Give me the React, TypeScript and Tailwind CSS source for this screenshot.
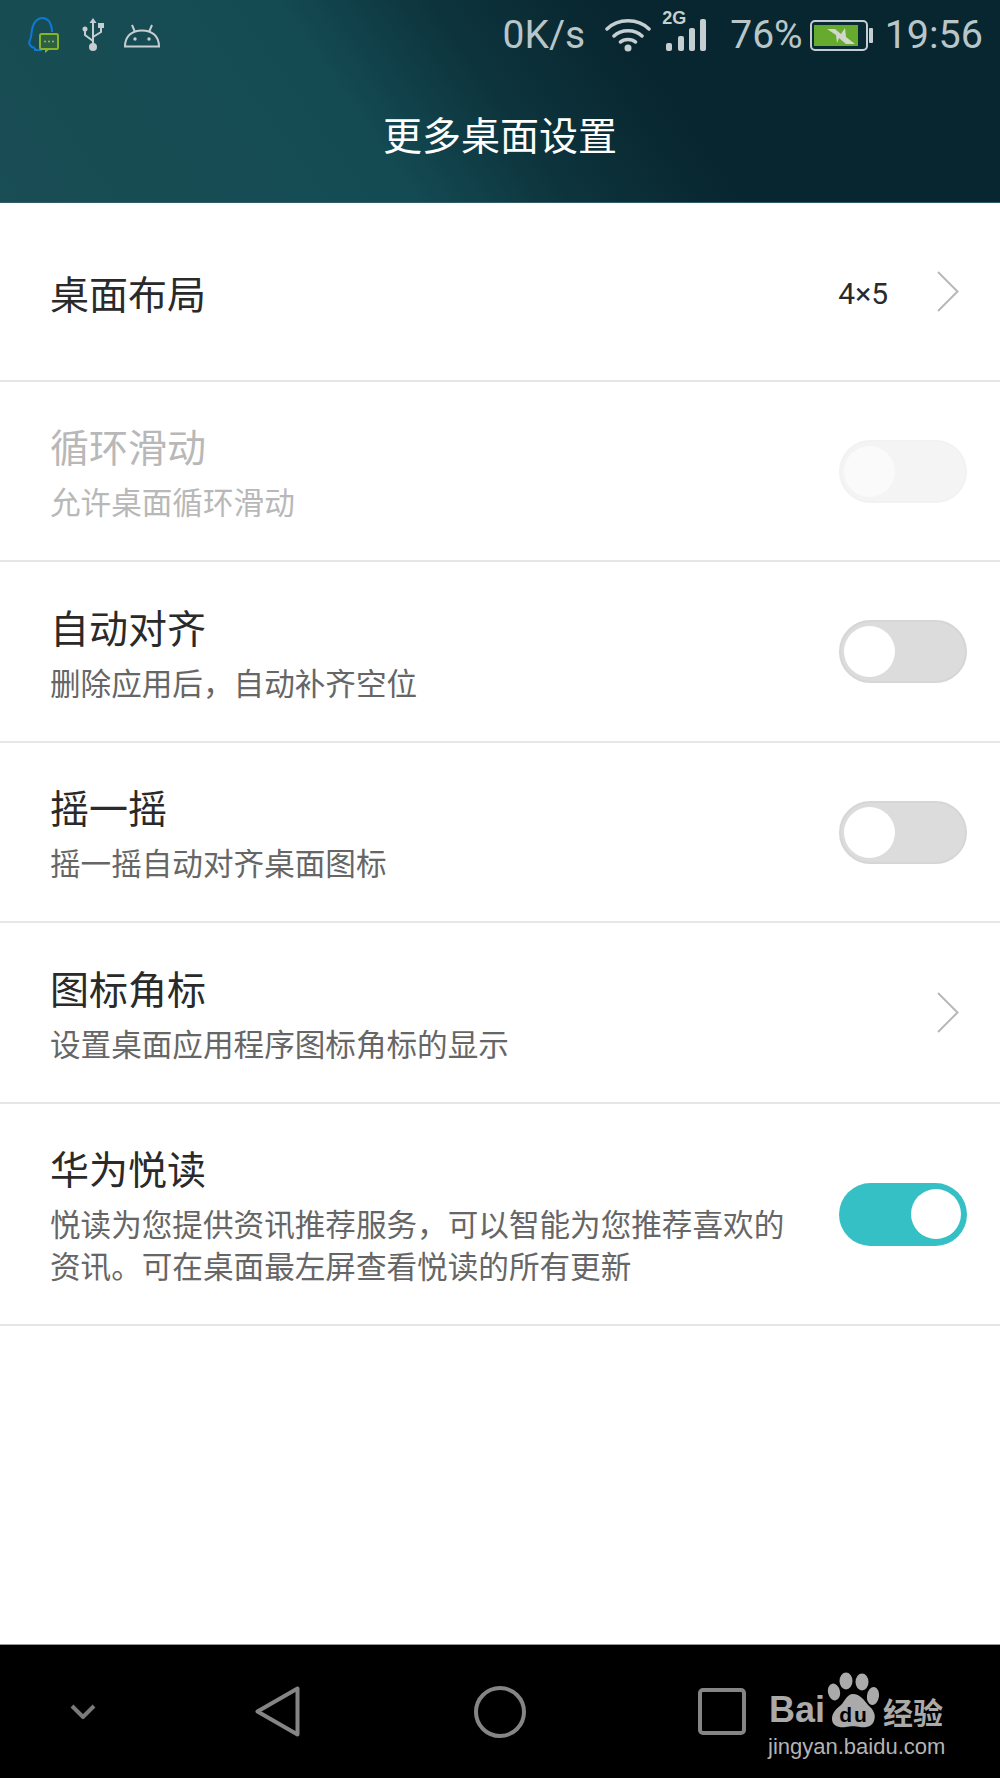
import React from "react";

const font = { fontFamily: '"Roboto","Noto Sans CJK SC",sans-serif' };

function Toggle({ on, disabled }: { on?: boolean; disabled?: boolean }) {
  if (on)
    return (
      <div className="w-[128px] h-[63px] rounded-full bg-[#35c0c5] flex items-center justify-end pr-[6px] shrink-0">
        <div className="w-[50px] h-[50px] rounded-full bg-white" />
      </div>
    );
  return (
    <div className={`w-[128px] h-[63px] rounded-full border-2 flex items-center pl-[3px] shrink-0 ${disabled ? "bg-[#f4f4f4] border-[#f2f2f2]" : "bg-[#dcdcdc] border-[#d6d6d6]"}`}>
      <div className={`w-[51px] h-[51px] rounded-full ${disabled ? "bg-[#fafafa]" : "bg-white"}`} />
    </div>
  );
}

function Chevron() {
  return (
    <svg width="22" height="41" viewBox="0 0 22 41" fill="none" className="shrink-0">
      <path d="M1 1 L20.5 20.5 L1 40" stroke="#b8b8b8" strokeWidth="2" />
    </svg>
  );
}

function Row({ title, sub, right, disabled, h }: { title: string; sub?: React.ReactNode; right?: React.ReactNode; disabled?: boolean; h: string }) {
  return (
    <div className={`${h} border-b-2 border-[#e6e6e6] flex items-center pl-[50px] pr-[33px]`}>
      <div className={`flex-1 min-w-0 ${sub ? "pt-[7px]" : "pt-[8px]"}`}>
        <div className={`text-[39px] leading-[50px] ${disabled ? "text-[#b8b8b8]" : "text-[#2a2a2a]"}`}>{title}</div>
        {sub && <div className={`mt-[9px] text-[30.6px] leading-[42px] ${disabled ? "text-[#b8b8b8]" : "text-[#666666]"}`}>{sub}</div>}
      </div>
      {right}
    </div>
  );
}

function StatusLeftIcons() {
  return (
    <>
      <svg width="32" height="37" viewBox="0 0 32 37" fill="none">
        <path d="M8 31 C3 30 1 27 3 23 C4.5 20 4 18 5 13 C6 5 11 1 15 1 C20 1 24 5 25 13 L25 15" stroke="#0f78d2" strokeWidth="2" />
        <path d="M8 31 L8 33 L15 33" stroke="#0f78d2" strokeWidth="2" />
        <rect x="13" y="17" width="18" height="15" rx="1.5" fill="#2d5f45" stroke="#86b32a" strokeWidth="2" />
        <path d="M18 32 L18 36 L23 32 Z" fill="#86b32a" />
        <circle cx="18" cy="24.5" r="1" fill="#9cc33c" />
        <circle cx="22" cy="24.5" r="1" fill="#9cc33c" />
        <circle cx="26" cy="24.5" r="1" fill="#9cc33c" />
      </svg>
      <svg className="ml-[23px]" width="22" height="34" viewBox="0 0 22 34" fill="none" stroke="#c5cfd1" strokeWidth="2">
        <path d="M11 3 V28 M11 23 L3 17 V13 M11 19 L19 14 V9" />
        <path d="M11 0 L14.5 5 H7.5 Z" fill="#c5cfd1" stroke="none" />
        <circle cx="11" cy="29" r="4" fill="#c5cfd1" stroke="none" />
        <circle cx="3" cy="11" r="2.5" fill="#c5cfd1" stroke="none" />
        <rect x="16" y="5" width="6" height="5" fill="#c5cfd1" stroke="none" />
      </svg>
      <svg className="ml-[19px] mt-[2px]" width="38" height="24" viewBox="0 0 38 24" fill="none" stroke="#c5cfd1" strokeWidth="2">
        <path d="M2 22.5 C2 12 9 6.5 19 6.5 C29 6.5 36 12 36 22.5 Z" />
        <path d="M9 1 L12 8 M29 1 L26 8" />
        <circle cx="12" cy="15" r="1.7" fill="#c5cfd1" stroke="none" />
        <circle cx="26" cy="15" r="1.7" fill="#c5cfd1" stroke="none" />
      </svg>
    </>
  );
}

function Wifi() {
  return (
    <svg className="ml-[20px] shrink-0" width="46" height="34" viewBox="0 0 46 34" fill="none" stroke="#c5cfd1" strokeWidth="3.5" strokeLinecap="round">
      <path d="M2 11 C13 0 33 0 44 11 M9 18 C16 11 30 11 37 18 M15.5 24 C19 20.5 27 20.5 30.5 24" />
      <circle cx="23" cy="30" r="3.5" fill="#c5cfd1" stroke="none" />
    </svg>
  );
}

function Signal() {
  return (
    <div className="relative w-[40px] h-[32px] ml-[15px] shrink-0 flex items-end justify-between">
      <div className="absolute left-[-4px] top-[-10px] text-[18px] leading-[18px] font-bold text-[#c5cfd1]" style={{ fontFamily: '"Liberation Sans",sans-serif' }}>2G</div>
      <div className="w-[6px] h-[8px] rounded-[2px] bg-[#c5cfd1]" />
      <div className="w-[6px] h-[15px] rounded-[2px] bg-[#c5cfd1]" />
      <div className="w-[6px] h-[23px] rounded-[2px] bg-[#c5cfd1]" />
      <div className="w-[6px] h-[32px] rounded-[2px] bg-[#c5cfd1]" />
    </div>
  );
}

function Battery() {
  return (
    <svg className="ml-[7px] shrink-0" width="63" height="31" viewBox="0 0 63 31">
      <rect x="1" y="1" width="56" height="29" rx="4" fill="#0a2a33" stroke="#c5cfd1" strokeWidth="2" />
      <rect x="4" y="5" width="44" height="21" fill="#67ab2e" />
      <rect x="59" y="8" width="4" height="15" rx="1" fill="#c5cfd1" />
      <path d="M17 9 L25 9 L31 14 L35 8 L36 17 L45 24 L36 24 L29 18 L27 23 L26 15 Z" fill="#d0d8cc" />
    </svg>
  );
}

function Paw() {
  return (
    <div className="relative w-[53px] h-[56px] ml-[2px] shrink-0">
      <svg className="absolute inset-0" width="53" height="56" viewBox="0 0 53 56" fill="#aaaaaa">
        <ellipse cx="7" cy="20" rx="6" ry="8.5" transform="rotate(-12 7 20)" />
        <ellipse cx="19" cy="9" rx="6.5" ry="8.5" />
        <ellipse cx="35" cy="10" rx="6.5" ry="8.5" />
        <ellipse cx="46" cy="24" rx="6" ry="9" transform="rotate(8 46 24)" />
        <path d="M26 22 C33 22 37 28 41 33 C47 38 49 43 47 49 C45 55 38 56 33 55 C29 54 23 54 19 55 C12 56 5 54 5 47 C5 41 9 37 14 33 C18 29 20 22 26 22 Z" />
      </svg>
      <div className="absolute left-[10px] top-[32px] w-[34px] text-center text-[21px] leading-[21px] tracking-[2px] font-bold text-black" style={{ fontFamily: '"Liberation Sans",sans-serif' }}>du</div>
    </div>
  );
}

function BaiduMark() {
  return (
    <div className="absolute left-[768px] top-[27px] w-[180px] text-[#aaaaaa]" style={{ fontFamily: '"Liberation Sans","Noto Sans CJK SC",sans-serif' }}>
      <div className="flex items-end h-[56px]">
        <span className="text-[36px] leading-[36px] font-bold pl-[1px]">Bai</span>
        <Paw />
        <span className="text-[30px] leading-[34px] font-bold ml-[3px]" style={{ fontFamily: '"Noto Sans CJK SC",sans-serif' }}>经验</span>
      </div>
      <div className="text-[22px] leading-[24px] mt-[7px] text-[#b4b4b4]">jingyan.baidu.com</div>
    </div>
  );
}

export default function App() {
  return (
    <div className="w-[1000px] h-[1778px] bg-white flex flex-col overflow-hidden" style={font}>
      <header className="h-[203px] border-b border-[#2f5c66] bg-[linear-gradient(55deg,#1a4d54_0%,#144b53_36%,#0d343d_50%,#08262f_65%,#08262f_100%)] flex flex-col">
        <div className="h-[70px] flex items-center pl-[27px] pr-[17px] text-[#b9c6c9]">
          <StatusLeftIcons />
          <div className="flex-1" />
          <span className="text-[39px] leading-[40px]">0K/s</span>
          <Wifi />
          <Signal />
          <span className="ml-[24px] text-[39px] leading-[40px]">76%</span>
          <Battery />
          <span className="ml-[12px] text-[39.5px] leading-[40px]">19:56</span>
        </div>
        <div className="flex-1 flex items-center justify-center text-white text-[39px] pt-[2px]">更多桌面设置</div>
      </header>
      <Row h="h-[179px]" title="桌面布局" right={<div className="flex items-center gap-[49px] pr-[8px]"><span className="text-[30px] text-[#2a2a2a] pt-[3px]">4×5</span><Chevron /></div>} />
      <Row h="h-[180px]" disabled title="循环滑动" sub="允许桌面循环滑动" right={<Toggle disabled />} />
      <Row h="h-[181px]" title="自动对齐" sub="删除应用后，自动补齐空位" right={<Toggle />} />
      <Row h="h-[180px]" title="摇一摇" sub="摇一摇自动对齐桌面图标" right={<Toggle />} />
      <Row h="h-[181px]" title="图标角标" sub="设置桌面应用程序图标角标的显示" right={<div className="pr-[8px]"><Chevron /></div>} />
      <Row h="h-[222px]" title="华为悦读" sub={<>悦读为您提供资讯推荐服务，可以智能为您推荐喜欢的<br />资讯。可在桌面最左屏查看悦读的所有更新</>} right={<Toggle on />} />
      <div className="flex-1" />
      <nav className="h-[134px] border-t border-[#999999] bg-black flex items-center relative pl-[70px]">
        <svg width="26" height="15" viewBox="0 0 26 15" fill="none" stroke="#7a7a7a" strokeWidth="4"><path d="M2 2 L13 13 L24 2" /></svg>
        <svg className="ml-[159px]" width="45" height="51" viewBox="0 0 45 51" fill="none" stroke="#858585" strokeWidth="4" strokeLinejoin="round"><path d="M42.5 2.5 V48.5 L2.5 25.5 Z" /></svg>
        <svg className="ml-[174px]" width="52" height="52" viewBox="0 0 52 52" fill="none" stroke="#858585" strokeWidth="4"><circle cx="26" cy="26" r="24" /></svg>
        <svg className="ml-[172px]" width="48" height="47" viewBox="0 0 48 47" fill="none" stroke="#858585" strokeWidth="4"><rect x="2" y="2" width="44" height="43" rx="3" /></svg>
        <BaiduMark />
      </nav>
    </div>
  );
}
